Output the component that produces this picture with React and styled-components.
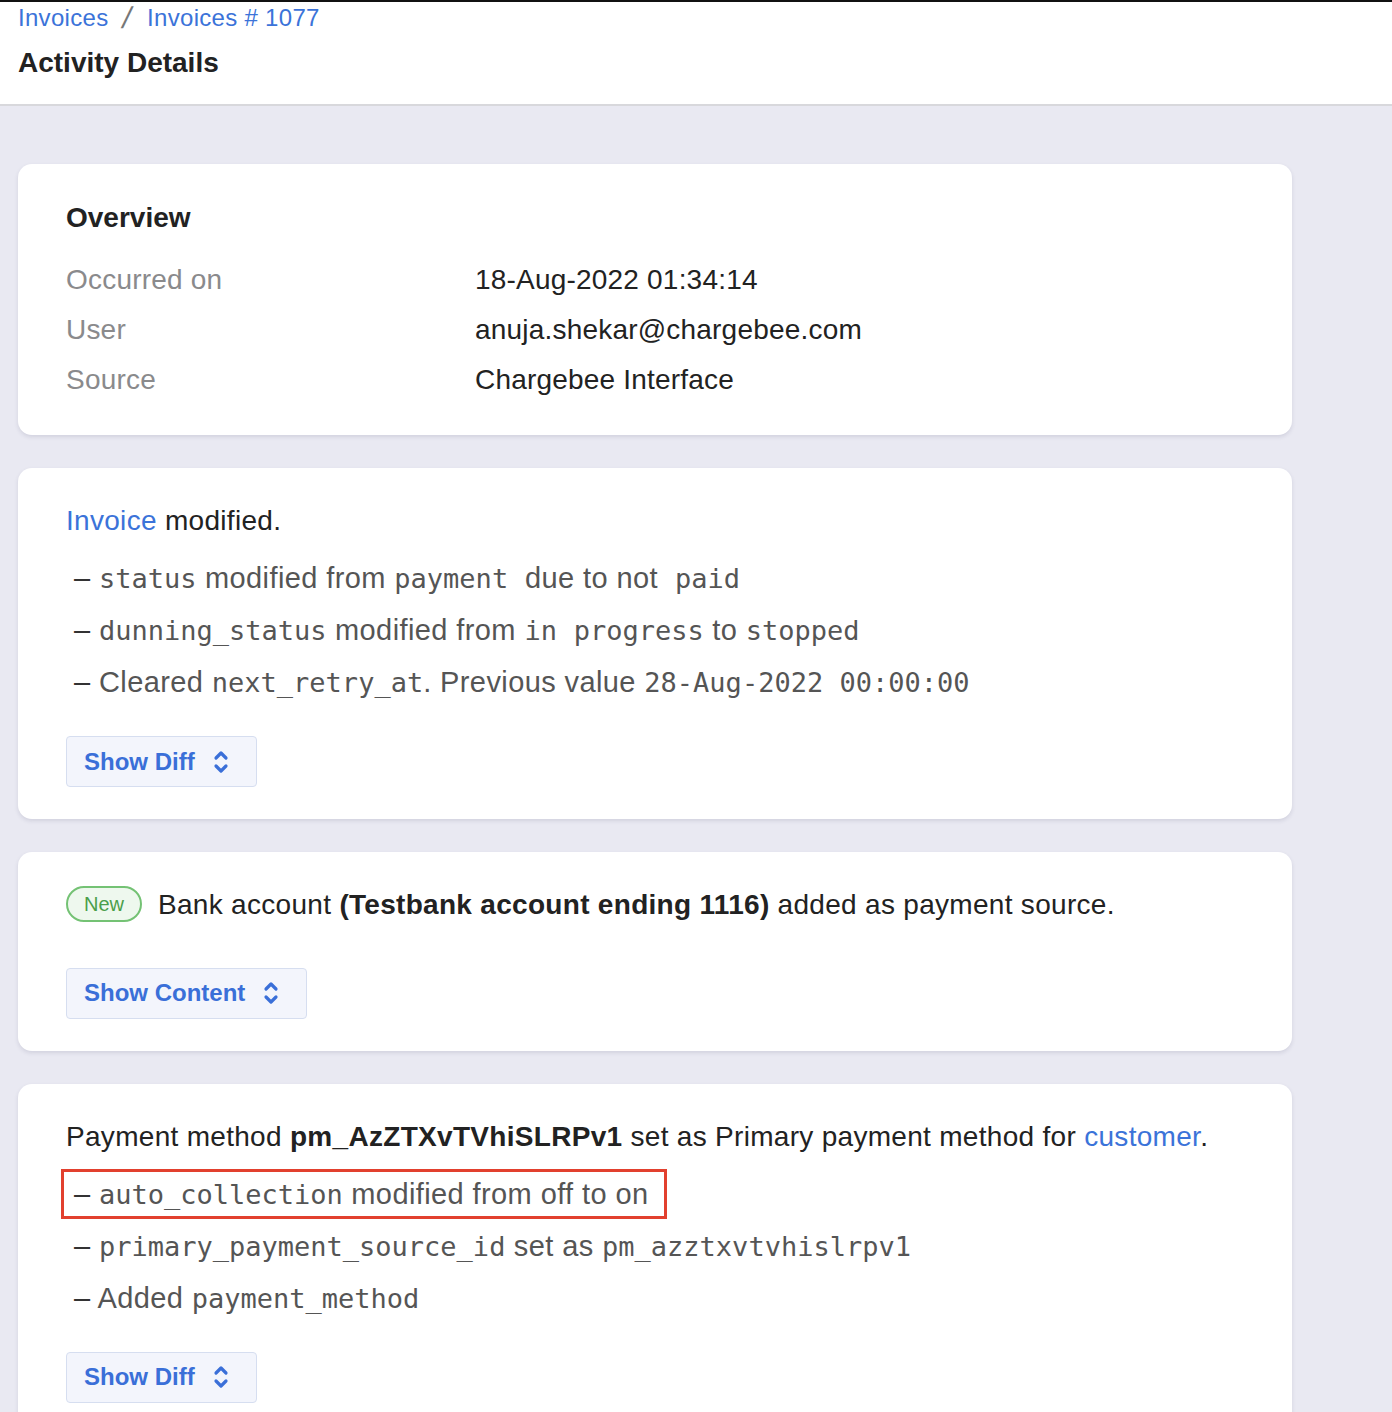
import React from 'react'
import styled, { createGlobalStyle } from 'styled-components'

const GlobalStyle = createGlobalStyle`
  html, body {
    margin: 0;
    padding: 0;
    background: #e9e9f2;
    font-family: "Liberation Sans", Arial, sans-serif;
    color: #222;
  }
`

function UpDownIcon() {
  return (
    <svg width="16" height="26" viewBox="0 0 16 26" fill="none" stroke="currentColor" strokeWidth="3.2" strokeLinecap="round" strokeLinejoin="round">
      <polyline points="3,9 8,4 13,9" />
      <polyline points="3,17 8,22 13,17" />
    </svg>
  )
}

function ToggleButton({ children }) {
  return (
    <Button>
      <span>{children}</span>
      <UpDownIcon />
    </Button>
  )
}

function App() {
  return (
    <>
      <GlobalStyle />
      <Page>
        <Header>
          <Breadcrumb>
            <Crumb>Invoices</Crumb>
            <Slash>/</Slash>
            <Crumb>Invoices # 1077</Crumb>
          </Breadcrumb>
          <Title>Activity Details</Title>
        </Header>

        <Content>
          <Card pad="37px 48px 30px">
            <CardTitle>Overview</CardTitle>
            <InfoGrid>
              <Label>Occurred on</Label>
              <Value>18-Aug-2022 01:34:14</Value>
              <Label>User</Label>
              <Value>anuja.shekar@chargebee.com</Value>
              <Label>Source</Label>
              <Value>Chargebee Interface</Value>
            </InfoGrid>
          </Card>

          <Card>
            <Lead><Link>Invoice</Link> modified.</Lead>
            <Changes>
              <Change>
                <Mono>status</Mono> modified from <Mono>payment</Mono>&nbsp; due to not&nbsp; <Mono>paid</Mono>
              </Change>
              <Change>
                <Mono>dunning_status</Mono> modified from <Mono>in</Mono>&nbsp; <Mono>progress</Mono> to <Mono>stopped</Mono>
              </Change>
              <Change>
                Cleared <Mono>next_retry_at</Mono>. Previous value <Mono>28-Aug-2022 00:00:00</Mono>
              </Change>
            </Changes>
            <ToggleButton>Show Diff</ToggleButton>
          </Card>

          <Card>
            <Lead>
              <Badge>New</Badge>
              Bank account <b>(Testbank account ending 1116)</b> added as payment source.
            </Lead>
            <Spacer />
            <ToggleButton>Show Content</ToggleButton>
          </Card>

          <Card last>
            <Lead>
              Payment method <b>pm_AzZTXvTVhiSLRPv1</b> set as Primary payment method for <Link>customer</Link>.
            </Lead>
            <Changes>
              <Change highlight>
                <Mono>auto_collection</Mono> modified from off to on
              </Change>
              <Change>
                <Mono>primary_payment_source_id</Mono> set as <Mono>pm_azztxvtvhislrpv1</Mono>
              </Change>
              <Change>
                Added <Mono>payment_method</Mono>
              </Change>
            </Changes>
            <ToggleButton>Show Diff</ToggleButton>
          </Card>
        </Content>
      </Page>
    </>
  )
}

export default App

const Page = styled.div`
  min-height: 1412px;
  background: #e9e9f2;
`

const Header = styled.div`
  background: #fff;
  border-top: 2px solid #111;
  border-bottom: 2px solid #d8d8dc;
  padding: 0 18px 24px;
`

const Breadcrumb = styled.div`
  display: flex;
  align-items: center;
  gap: 15px;
  font-size: 24px;
  line-height: 32px;
  letter-spacing: 0.3px;
`

const Crumb = styled.span`
  color: #3b73d9;
`

const Slash = styled.span`
  color: #777;
  font-size: 30px;
  transform: skewX(-12deg);
`

const Title = styled.h1`
  margin: 12px 0 0;
  font-size: 28px;
  line-height: 34px;
  font-weight: 700;
  color: #222;
`

const Content = styled.div`
  display: flex;
  flex-direction: column;
  gap: 33px;
  width: 1274px;
  padding: 58px 18px 0;
`

const Card = styled.div`
  background: #fff;
  border-radius: 14px;
  box-shadow: 0 2px 4px rgba(40, 40, 80, 0.12);
  padding: ${p => p.pad || '36px 48px 32px'};
  min-height: ${p => (p.last ? '360px' : 'auto')};
`

const CardTitle = styled.div`
  font-size: 28px;
  font-weight: 700;
  line-height: 34px;
  color: #222;
  margin-bottom: 20px;
`

const InfoGrid = styled.div`
  display: grid;
  grid-template-columns: 409px 1fr;
  font-size: 28px;
  line-height: 50px;
  letter-spacing: 0.2px;
`

const Label = styled.div`
  color: #8a8a8c;
`

const Value = styled.div`
  color: #222;
`

const Lead = styled.div`
  font-size: 28px;
  line-height: 34px;
  letter-spacing: 0.3px;
  color: #222;

  b {
    font-weight: 700;
  }
`

const Link = styled.span`
  color: #3b73d9;
`

const Badge = styled.span`
  display: inline-flex;
  align-items: center;
  vertical-align: middle;
  position: relative;
  top: -3px;
  height: 32px;
  padding: 0 16px;
  margin-right: 16px;
  border: 2px solid #74c274;
  border-radius: 18px;
  background: #eef8ee;
  color: #4a9f4a;
  font-size: 20px;
  letter-spacing: 0;
`

const Changes = styled.ul`
  list-style: none;
  margin: 15px 0 29px;
  padding: 0;
`

const Change = styled.li`
  width: max-content;
  height: 34px;
  padding: 5px 15px 5px 10px;
  margin-left: -5px;
  font-size: 29px;
  line-height: 34px;
  letter-spacing: 0.4px;
  color: #555;
  border: 3px solid ${p => (p.highlight ? '#e2402e' : 'transparent')};
  white-space: nowrap;

  &::before {
    content: '– ';
    color: #333;
  }

  & + & {
    margin-top: 2px;
  }
`

const Mono = styled.span`
  font-family: "DejaVu Sans Mono", "Liberation Mono", monospace;
  font-size: 27px;
  line-height: 1;
  letter-spacing: 0;
`

const Spacer = styled.div`
  height: 43px;
`

const Button = styled.button`
  display: inline-flex;
  align-items: center;
  gap: 18px;
  height: 51px;
  padding: 0 27px 0 17px;
  background: #f3f5fc;
  border: 1px solid #d6def0;
  border-radius: 4px;
  color: #3a6fd8;
  font-family: "Liberation Sans", Arial, sans-serif;
  font-size: 24px;
  font-weight: 700;
  cursor: pointer;
`
